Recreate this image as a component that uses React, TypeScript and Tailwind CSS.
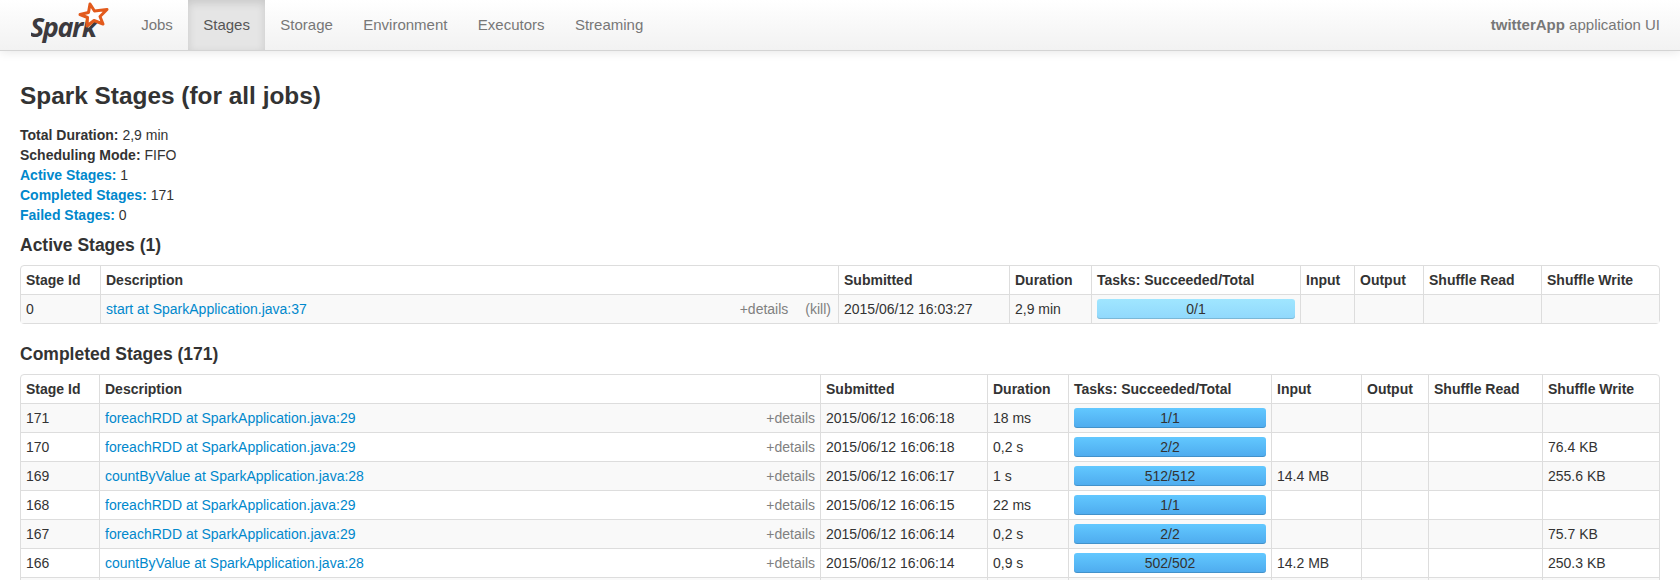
const SANS = 'font-["Liberation_Sans",Arial,sans-serif]';

type Row = {
  id: string;
  name: string;
  submitted: string;
  duration: string;
  tasks: string;
  input?: string;
  write?: string;
};

const completedRows: Row[] = [
  { id: '171', name: 'foreachRDD at SparkApplication.java:29', submitted: '2015/06/12 16:06:18', duration: '18 ms', tasks: '1/1' },
  { id: '170', name: 'foreachRDD at SparkApplication.java:29', submitted: '2015/06/12 16:06:18', duration: '0,2 s', tasks: '2/2', write: '76.4 KB' },
  { id: '169', name: 'countByValue at SparkApplication.java:28', submitted: '2015/06/12 16:06:17', duration: '1 s', tasks: '512/512', input: '14.4 MB', write: '255.6 KB' },
  { id: '168', name: 'foreachRDD at SparkApplication.java:29', submitted: '2015/06/12 16:06:15', duration: '22 ms', tasks: '1/1' },
  { id: '167', name: 'foreachRDD at SparkApplication.java:29', submitted: '2015/06/12 16:06:14', duration: '0,2 s', tasks: '2/2', write: '75.7 KB' },
  { id: '166', name: 'countByValue at SparkApplication.java:28', submitted: '2015/06/12 16:06:14', duration: '0,9 s', tasks: '502/502', input: '14.2 MB', write: '250.3 KB' },
];

const headers = ['Stage Id', 'Description', 'Submitted', 'Duration', 'Tasks: Succeeded/Total', 'Input', 'Output', 'Shuffle Read', 'Shuffle Write'];
const activeCols = ['w-[79px]', 'w-[738px]', 'w-[171px]', 'w-[82px]', 'w-[209px]', 'w-[54px]', 'w-[69px]', 'w-[118px]', 'w-[118px]'];
const completedCols = ['w-[78px]', 'w-[721px]', 'w-[167px]', 'w-[81px]', 'w-[203px]', 'w-[90px]', 'w-[67px]', 'w-[114px]', 'w-[117px]'];

const cell = 'h-[29px] border-l border-t border-[#dddddd] px-[5px] py-1 text-left align-top first:border-l-0';

function SparkLogo() {
  return (
    <svg width="95" height="50" viewBox="0 0 95 50" className="shrink-0">
      <text x="-1" y="37" fontFamily="'Open Sans', sans-serif" fontWeight="700" fontStyle="italic" fontSize="27" letterSpacing="-1.5" fill="#3c3a3e">
        Spark
      </text>
      <path
        d="M59 4 L63.5 11 L76 9.5 L69 16.5 L72 24 L63 20.5 L56 26 L56.5 17.5 L49 14.5 L57.5 12.5 Z"
        fill="#ffffff"
        stroke="#e25a1c"
        strokeWidth="3"
        strokeLinejoin="round"
      />
    </svg>
  );
}

function NavLink({ label, active }: { label: string; active?: boolean }) {
  return (
    <a
      className={
        active
          ? 'flex h-[50px] items-center bg-[#e5e5e5] px-[15.2px] text-[#555555] shadow-[inset_0_3px_8px_rgba(0,0,0,0.125)]'
          : 'flex h-[50px] items-center px-[15.2px] text-[#777777]'
      }
    >
      {label}
    </a>
  );
}

function Bar({ label, active }: { label: string; active?: boolean }) {
  return (
    <div
      className={
        active
          ? 'h-5 rounded-[3px] bg-gradient-to-b from-[#a0e6ff] to-[#90d8fc] text-center shadow-[inset_0_-1px_0_rgba(0,0,0,0.15)]'
          : 'h-5 rounded-[3px] bg-gradient-to-b from-[#62c8ff] to-[#4eabee] text-center shadow-[inset_0_-1px_0_rgba(0,0,0,0.15)]'
      }
    >
      {label}
    </div>
  );
}

function StageHead({ cols }: { cols: string[] }) {
  return (
    <thead>
      <tr>
        {headers.map((h, i) => (
          <th key={h} className={`${cols[i]} h-[28px] border-l border-[#dddddd] px-[5px] py-1 text-left align-top font-bold first:border-l-0`}>
            {h}
          </th>
        ))}
      </tr>
    </thead>
  );
}

function App() {
  return (
    <div className={`${SANS} h-[580px] overflow-hidden bg-white text-[14px] leading-5 text-[#333333]`}>
      <header className="relative flex h-[51px] items-center border-b border-[#d4d4d4] bg-gradient-to-b from-white to-[#f2f2f2] pl-[31px] pr-5 text-[15px] shadow-[0_1px_10px_rgba(0,0,0,0.1)]">
        <SparkLogo />
        <nav className="flex">
          <NavLink label="Jobs" />
          <NavLink label="Stages" active />
          <NavLink label="Storage" />
          <NavLink label="Environment" />
          <NavLink label="Executors" />
          <NavLink label="Streaming" />
        </nav>
        <p className="ml-auto text-[#777777]">
          <strong className="font-bold">twitterApp</strong> application UI
        </p>
      </header>

      <main className="px-5 pt-[25px]">
        <h3 className="mb-[9px] text-[24.4px] font-bold leading-10">Spark Stages (for all jobs)</h3>

        <ul>
          <li><strong>Total Duration:</strong> 2,9 min</li>
          <li><strong>Scheduling Mode:</strong> FIFO</li>
          <li><a className="font-bold text-[#0088cc]">Active Stages:</a> 1</li>
          <li><a className="font-bold text-[#0088cc]">Completed Stages:</a> 171</li>
          <li><a className="font-bold text-[#0088cc]">Failed Stages:</a> 0</li>
        </ul>

        <h4 className="mt-[10px] mb-[10px] text-[17.5px] font-bold leading-5">Active Stages (1)</h4>
        <table className="w-[1640px] table-fixed border-separate border-spacing-0 rounded border border-[#dddddd]">
          <StageHead cols={activeCols} />
          <tbody>
            <tr className="bg-[#f9f9f9]">
              <td className={cell}>0</td>
              <td className={cell}>
                <div className="flex pr-[2px]">
                  <a className="text-[#0088cc]">start at SparkApplication.java:37</a>
                  <span className="ml-auto text-[#808080]">+details</span>
                  <span className="ml-[17px] text-[#808080]">(kill)</span>
                </div>
              </td>
              <td className={cell}>2015/06/12 16:03:27</td>
              <td className={cell}>2,9 min</td>
              <td className={cell}><Bar label="0/1" active /></td>
              <td className={cell} />
              <td className={cell} />
              <td className={cell} />
              <td className={cell} />
            </tr>
          </tbody>
        </table>

        <h4 className="mt-[20px] mb-[10px] text-[17.5px] font-bold leading-5">Completed Stages (171)</h4>
        <table className="w-[1640px] table-fixed border-separate border-spacing-0 rounded border border-[#dddddd]">
          <StageHead cols={completedCols} />
          <tbody>
            {completedRows.map((r, i) => (
              <tr key={r.id} className={i % 2 === 0 ? 'bg-[#f9f9f9]' : 'bg-white'}>
                <td className={cell}>{r.id}</td>
                <td className={cell}>
                  <div className="flex justify-between">
                    <a className="text-[#0088cc]">{r.name}</a>
                    <span className="text-[#808080]">+details</span>
                  </div>
                </td>
                <td className={cell}>{r.submitted}</td>
                <td className={cell}>{r.duration}</td>
                <td className={cell}><Bar label={r.tasks} /></td>
                <td className={cell}>{r.input}</td>
                <td className={cell} />
                <td className={cell} />
                <td className={cell}>{r.write}</td>
              </tr>
            ))}
            <tr className="bg-[#f9f9f9]">
              {headers.map((h) => (
                <td key={h} className={cell} />
              ))}
            </tr>
          </tbody>
        </table>
      </main>
    </div>
  );
}

export default App;
